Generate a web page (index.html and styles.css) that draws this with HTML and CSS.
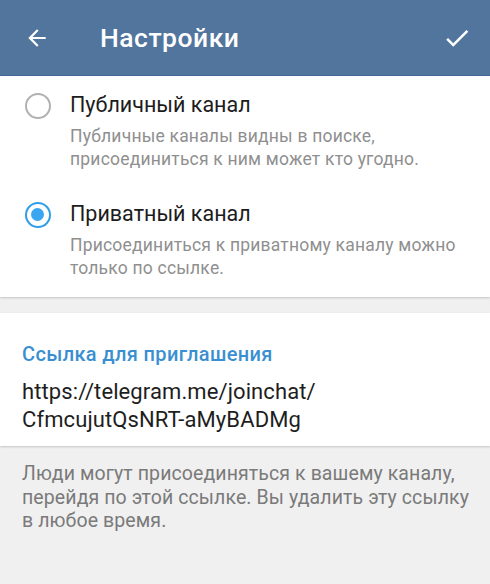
FILE: index.html
```html
<!DOCTYPE html>
<html lang="ru">
<head>
<meta charset="utf-8">
<link rel="stylesheet" href="styles.css">
</head>
<body>
<header class="bar">
  <svg class="icon back" width="26" height="26" viewBox="0 0 24 24"><path d="M20 11H7.83l5.59-5.59L12 4l-8 8 8 8 1.41-1.41L7.83 13H20v-2z" fill="#fff"/></svg>
  <h1 class="title">Настройки</h1>
  <svg class="icon done" width="30" height="30" viewBox="0 0 24 24"><path d="M9 16.17L4.83 12l-1.42 1.41L9 19 21 7l-1.41-1.41z" fill="#fff"/></svg>
</header>
<section class="card options">
  <div class="option">
    <span class="radio"></span>
    <div class="opt-text">
      <div class="opt-title">Публичный канал</div>
      <div class="opt-desc">Публичные каналы видны в поиске,<br>присоединиться к ним может кто угодно.</div>
    </div>
  </div>
  <div class="option">
    <span class="radio checked"></span>
    <div class="opt-text">
      <div class="opt-title">Приватный канал</div>
      <div class="opt-desc">Присоединиться к приватному каналу можно<br>только по ссылке.</div>
    </div>
  </div>
</section>
<section class="card link">
  <div class="link-head">Ссылка для приглашения</div>
  <div class="link-url">https://telegram.me/joinchat/<br>CfmcujutQsNRT-aMyBADMg</div>
</section>
<p class="hint">Люди могут присоединяться к вашему каналу,<br>перейдя по этой ссылке. Вы удалить эту ссылку<br>в любое время.</p>
</body>
</html>
```
FILE: styles.css
```css
* { box-sizing: border-box; }
html, body { margin: 0; padding: 0; }
body {
  width: 490px;
  height: 584px;
  overflow: hidden;
  background: #f0f0f0;
  font-family: Roboto, "Noto Sans", sans-serif;
}
.bar {
  height: 76px;
  background: #52759e;
  border-bottom: 1px solid #46699a;
  display: flex;
  align-items: center;
  padding: 0 18px 0 24px;
}
.back { flex: none; }
.title {
  margin: 0 0 0 50px;
  flex: 1;
  color: #fff;
  font-size: 26.5px;
  font-weight: 500;
  letter-spacing: 0.5px;
}
.done { flex: none; }
.card {
  background: #fff;
  box-shadow: 0 1px 2px rgba(0,0,0,0.18);
}
.options {
  padding: 15px 0 17px;
}
.option {
  display: flex;
  padding-left: 25px;
}
.option + .option { margin-top: 29px; }
.radio {
  flex: none;
  width: 26px;
  height: 26px;
  border-radius: 50%;
  border: 2.5px solid #b1b1b1;
  margin-top: 2px;
  position: relative;
}
.radio.checked { border-color: #2f9ee6; }
.radio.checked::after {
  content: "";
  position: absolute;
  left: 4px; top: 4px;
  width: 13px; height: 13px;
  border-radius: 50%;
  background: #39a6ef;
}
.opt-text { margin-left: 19px; white-space: nowrap; }
.opt-title {
  font-size: 21.5px;
  color: #1c1c1c;
  line-height: 28px;
}
.opt-desc {
  margin-top: 6px;
  font-size: 17.5px;
  letter-spacing: 0.2px;
  line-height: 23px;
  color: #8f8f8f;
}
.link {
  margin-top: 16px;
  padding: 28px 22px 12px;
  white-space: nowrap;
}
.link-head {
  font-size: 20px;
  font-weight: 500;
  letter-spacing: 0.35px;
  color: #3a8fd2;
  line-height: 26px;
}
.link-url {
  margin-top: 11px;
  font-size: 22px;
  letter-spacing: 0.1px;
  line-height: 28px;
  color: #1e1e1e;
}
.hint {
  margin: 0;
  padding: 16px 22px;
  font-size: 19.5px;
  letter-spacing: 0.1px;
  line-height: 23.5px;
  color: #7a7a7a;
  white-space: nowrap;
}
```
